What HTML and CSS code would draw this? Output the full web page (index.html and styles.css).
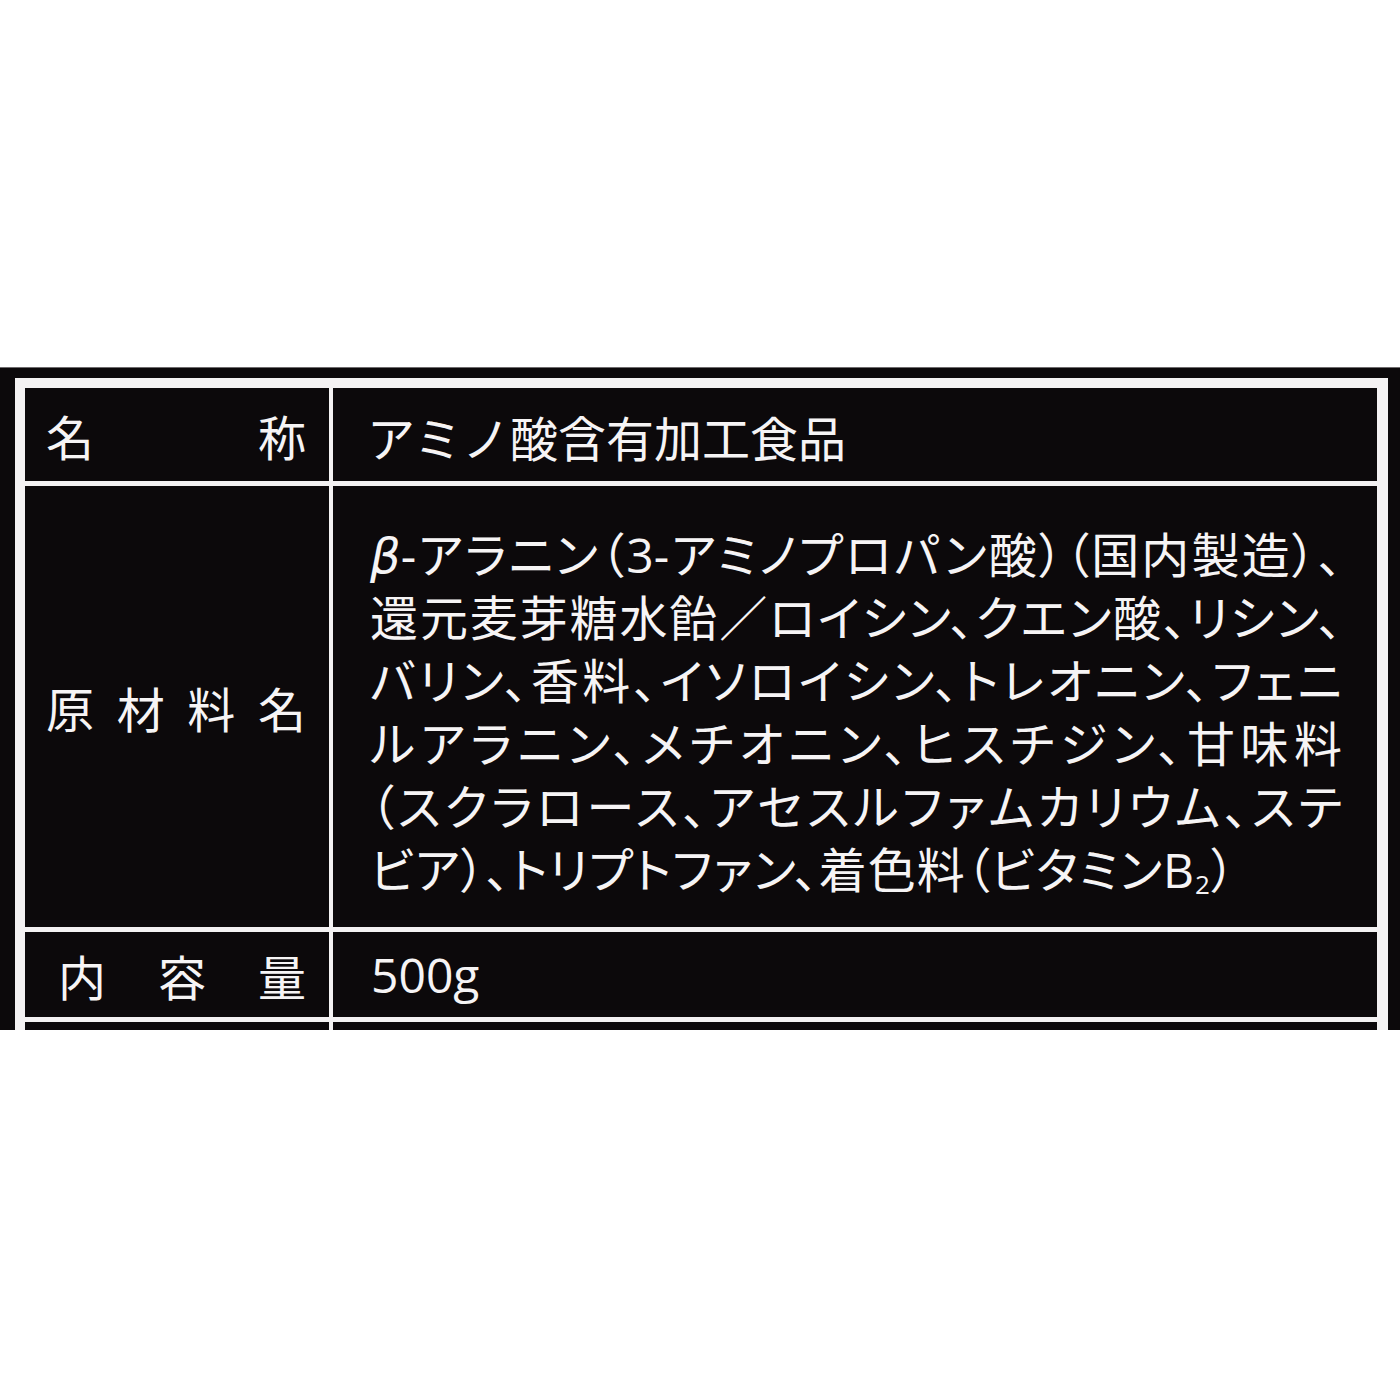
FILE: index.html
```html
<!DOCTYPE html>
<html lang="ja">
<head>
<meta charset="utf-8">
<title>食品表示</title>
<link rel="stylesheet" href="styles.css">
</head>
<body>
<div class="panel">
  <div class="label-table">
    <div class="cell key"><span class="key-text">名称</span></div>
    <div class="cell val row1">アミノ酸含有加工食品</div>

    <div class="cell key"><span class="key-text">原材料名</span></div>
    <div class="cell val ingredients">
      <div class="line just"><i class="beta">β</i>-アラニン（3-アミノプロパン酸）（国内製造）、</div>
      <div class="line just">還元麦芽糖水飴／ロイシン、クエン酸、リシン、</div>
      <div class="line just">バリン、香料、イソロイシン、トレオニン、フェニ</div>
      <div class="line just">ルアラニン、メチオニン、ヒスチジン、甘味料</div>
      <div class="line just">（スクラロース、アセスルファムカリウム、ステ</div>
      <div class="line last">ビア）、トリプトファン、着色料（ビタミンB<span class="sub">2</span>）</div>
    </div>

    <div class="cell key"><span class="key-text key-wide">内容量</span></div>
    <div class="cell val row3">500g</div>

    <div class="cell key"></div>
    <div class="cell val"></div>
  </div>
</div>
</body>
</html>
```
FILE: styles.css
```css
html, body {
  margin: 0;
  padding: 0;
  background: #ffffff;
}

body {
  padding-top: 367px;
  font-family: "Open Sans", "Noto Sans CJK JP", sans-serif;
}

.panel {
  background: #0c090b;
  height: 663px;
  overflow: hidden;
  padding: 10px 12px 0 15px;
  border-top: 1px solid #6d6a6c;
  box-sizing: border-box;
}

.label-table {
  display: grid;
  grid-template-columns: 304px 1044px;
  grid-template-rows: 93px 441px 85px 120px;
  gap: 5px 4px;
  background: #f4f2f3;
  border-top: 10px solid #f4f2f3;
  border-left: 10px solid #f4f2f3;
  border-right: 11px solid #f4f2f3;
  width: max-content;
}

.cell {
  background: #0c090b;
  color: #f6f4f5;
  font-size: 48px;
  font-weight: 400;
  display: flex;
  align-items: center;
}

.key {
  padding: 0 23px 0 21px;
}

.key-text {
  display: block;
  width: 100%;
  text-align: justify;
  text-align-last: justify;
  font-family: "Noto Sans CJK JP", sans-serif;
  line-height: 1;
}

.key-wide {
  padding-left: 12px;
  padding-right: 0;
  box-sizing: border-box;
}

.val {
  padding-left: 34px;
  padding-right: 35px;
  font-feature-settings: "palt";
}

.row1 {
  padding-top: 2px;
  padding-left: 34px;
  font-family: "Noto Sans CJK JP", sans-serif;
  font-feature-settings: normal;
}

.ingredients {
  flex-direction: column;
  align-items: stretch;
  justify-content: center;
  padding-top: 10px;
  padding-left: 37px;
}

.line {
  line-height: 63px;
  height: 63px;
  white-space: nowrap;
}

.line.just {
  text-align: justify;
  text-align-last: justify;
}

.line.last {
  letter-spacing: 1px;
}

.beta {
  font-family: "DejaVu Sans", sans-serif;
  font-style: italic;
  font-weight: 300;
}

.sub {
  font-size: 26px;
  vertical-align: -6px;
  line-height: 1;
}

.row3 {
  padding-left: 38px;
}
```
